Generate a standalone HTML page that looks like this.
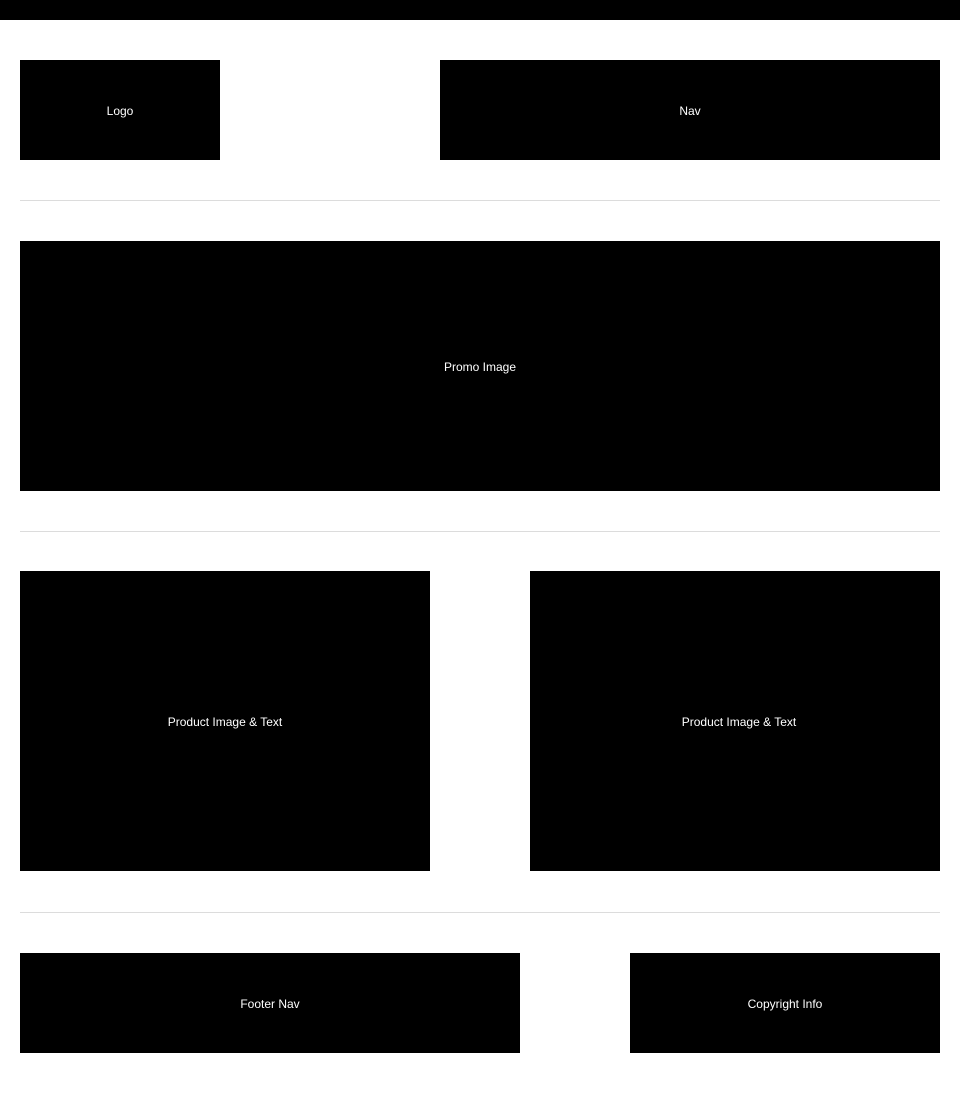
<!DOCTYPE html>
<html><head><meta charset="utf-8"><style>
*{margin:0;padding:0;box-sizing:border-box}
html,body{width:960px;height:1093px;background:#fff;overflow:hidden}
body{position:relative;font-family:"Liberation Sans",Arial,sans-serif;font-size:12px;color:#fff}
.b{position:absolute;background:#000;display:flex;align-items:center;justify-content:center;padding-top:2px}
.hr{position:absolute;left:20px;width:920px;height:1px;background:#dcdcdc}
</style></head><body>
<div class="b" style="left:0;top:0;width:960px;height:20px"></div>
<div class="b" style="left:20px;top:60px;width:200px;height:100px">Logo</div>
<div class="b" style="left:440px;top:60px;width:500px;height:100px">Nav</div>
<div class="hr" style="top:200px"></div>
<div class="b" style="left:20px;top:241px;width:920px;height:250px">Promo Image</div>
<div class="hr" style="top:531px"></div>
<div class="b" style="left:20px;top:571px;width:410px;height:300px">Product Image &amp; Text</div>
<div class="b" style="left:530px;top:571px;width:410px;height:300px;padding-left:8px">Product Image &amp; Text</div>
<div class="hr" style="top:912px"></div>
<div class="b" style="left:20px;top:953px;width:500px;height:100px">Footer Nav</div>
<div class="b" style="left:630px;top:953px;width:310px;height:100px">Copyright Info</div>
</body></html>
